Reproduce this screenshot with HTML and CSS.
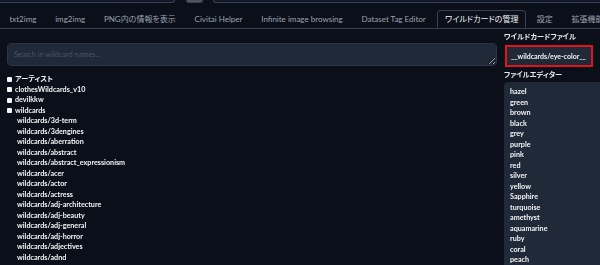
FILE: index.html
```html
<!DOCTYPE html>
<html lang="ja">
<head>
    <meta charset="UTF-8">
    <title>Wildcards</title>
    <link rel="stylesheet" href="styles.css">
</head>
<body>

<div class="top-strip">
    <div class="stub stub-wide"></div>
    <div class="stub stub-btn"></div>
    <div class="stub stub-rest"></div>
</div>

<div class="tabs">
    <div class="tab">txt2img</div>
    <div class="tab">img2img</div>
    <div class="tab">PNG内の情報を表示</div>
    <div class="tab">Civitai Helper</div>
    <div class="tab">Infinite image browsing</div>
    <div class="tab">Dataset Tag Editor</div>
    <div class="tab selected">ワイルドカードの管理</div>
    <div class="tab">設定</div>
    <div class="tab">拡張機能</div>
</div>

<div class="container">
    <div class="column left">
        <textarea class="search" placeholder="Search in wildcard names..."></textarea>
        <ul class="tree">
            <!-- filled from script below -->
        </ul>
    </div>
    <div class="column right">
        <label class="field-label">ワイルドカードファイル</label>
        <div class="file-box">__wildcards/eye-color__</div>
        <label class="field-label">ファイルエディター</label>
        <div class="editor" id="editor"></div>
    </div>
</div>

<script>
    const roots = ['アーティスト', 'clothesWildcards_v10', 'devilkkw', 'wildcards'];
    const children = ['3d-term', '3dengines', 'aberration', 'abstract', 'abstract_expressionism',
        'acer', 'actor', 'actress', 'adj-architecture', 'adj-beauty', 'adj-general',
        'adj-horror', 'adjectives', 'adnd'];
    const colors = ['hazel', 'green', 'brown', 'black', 'grey', 'purple', 'pink', 'red', 'silver',
        'yellow', 'Sapphire', 'turquoise', 'amethyst', 'aquamarine', 'ruby', 'coral', 'peach'];

    const tree = document.querySelector('.tree');
    roots.forEach(name => {
        const li = document.createElement('li');
        li.className = 'node';
        li.innerHTML = `<span class="box"></span>${name}`;
        tree.appendChild(li);
    });
    children.forEach(name => {
        const li = document.createElement('li');
        li.className = 'leaf';
        li.textContent = 'wildcards/' + name;
        tree.appendChild(li);
    });

    document.getElementById('editor').innerHTML = colors.map(c => `<div>${c}</div>`).join('');
</script>

</body>
</html>
```

FILE: styles.css
```css
body {
    font-family: Lato, "Noto Sans CJK JP", sans-serif;
    font-feature-settings: "palt";
    margin: 0;
    background-color: #0b0f19;
    color: #f3f4f6;
    height: 265px;
    overflow: hidden;
}
.top-strip {
    display: flex;
    height: 3px;
}
.stub {
    border: 1px solid #374151;
    border-top: none;
    border-radius: 0 0 3px 3px;
    background-color: #111827;
}
.stub-wide {
    width: 177px;
    margin-left: -4px;
}
.stub-btn {
    width: 15px;
    margin-left: 11px;
    background-color: #4b5563;
}
.stub-rest {
    flex: 1;
    margin-left: 10px;
    margin-right: -4px;
}
.tabs {
    display: flex;
    margin-top: 7px;
    border-bottom: 1px solid #374151;
    height: 18px;
    font-size: 8px;
    white-space: nowrap;
    overflow: hidden;
}
.tab {
    padding: 0 9.4px;
    line-height: 18px;
    color: #9ca3af;
}
.tab.selected {
    color: #f3f4f6;
    border: 1px solid #374151;
    border-bottom: 1px solid #0b0f19;
    border-radius: 4px 4px 0 0;
    line-height: 17px;
    margin: 0 1px 0 2px;
    padding: 0 7px;
}
.container {
    display: flex;
    gap: 7px;
    padding: 0 0 0 7px;
}
.left {
    width: 490px;
    padding-top: 14px;
}
.right {
    flex: 1;
    min-width: 0;
    padding-top: 3px;
}
.search {
    display: block;
    box-sizing: border-box;
    width: 100%;
    height: 23px;
    margin: 0;
    padding: 6px 6px;
    background-color: #1f2937;
    border: 1px solid #2b3545;
    border-radius: 4px;
    color: #f3f4f6;
    font-family: Lato, sans-serif;
    font-size: 7.4px;
    line-height: 10px;
}
.search::placeholder {
    color: #4b5563;
}
.tree {
    list-style: none;
    margin: 8px 0 0 0;
    padding: 0;
    font-size: 7.2px;
    line-height: 10.5px;
}
.node {
    display: flex;
    align-items: center;
    font-weight: bold;
}
.box {
    width: 5px;
    height: 5px;
    background-color: #f3f4f6;
    border-radius: 1px;
    margin-right: 3px;
}
.leaf {
    padding-left: 10px;
    font-weight: bold;
}
.field-label {
    display: block;
    font-size: 7.2px;
    line-height: 10px;
    color: #e5e7eb;
    font-weight: bold;
    white-space: nowrap;
}
.file-box {
    margin: 3px 7px 3px 1px;
    height: 18px;
    border: 2px solid #e1141c;
    background-color: #1f2937;
    font-size: 7px;
    font-weight: bold;
    line-height: 18px;
    padding-left: 4px;
    white-space: nowrap;
    overflow: hidden;
}
.editor {
    margin-top: 2px;
    background-color: #1f2937;
    border-radius: 4px 0 0 0;
    padding: 5px 6px;
    font-size: 7.2px;
    line-height: 10.5px;
    font-weight: bold;
    height: 174px;
    overflow: hidden;
}
```
